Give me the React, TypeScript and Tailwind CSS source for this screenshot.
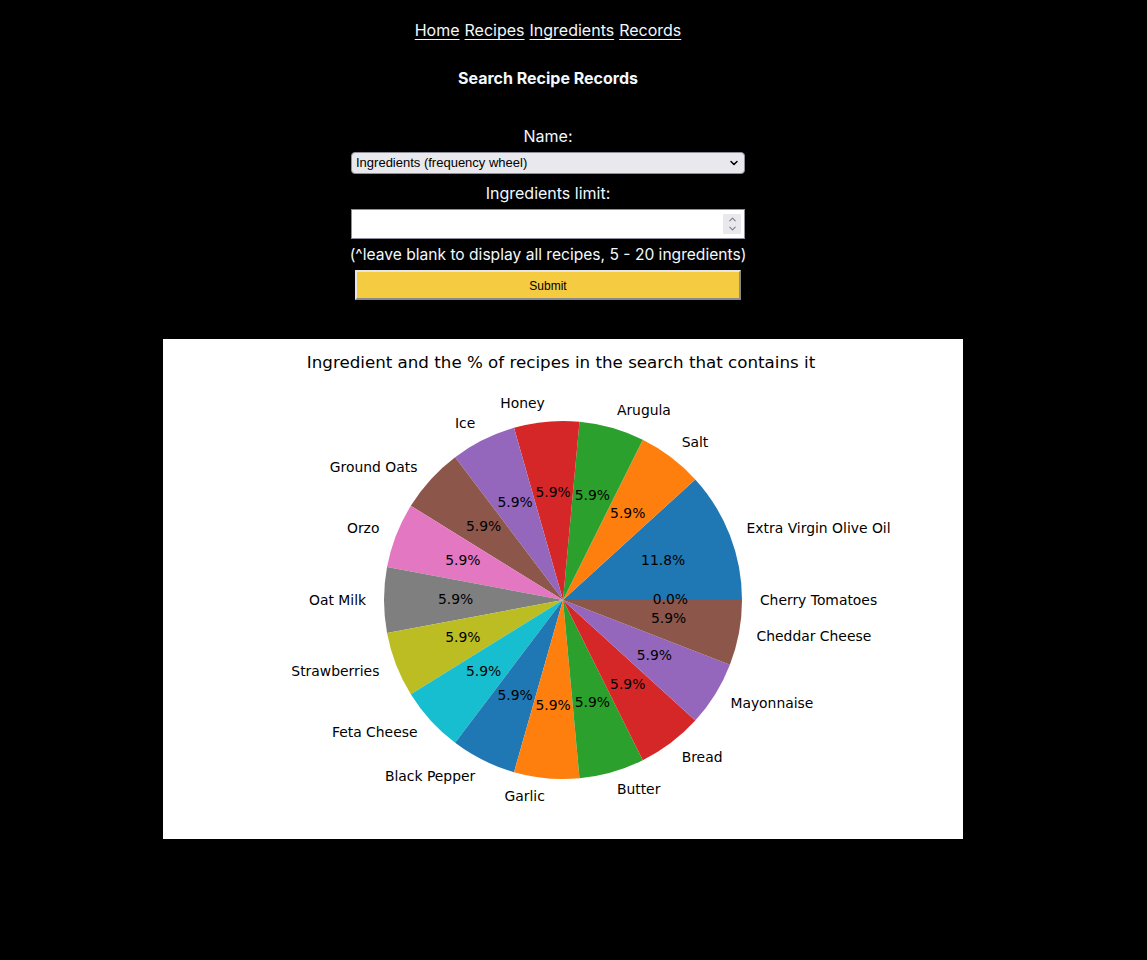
import { ChevronDown, ChevronUp } from 'lucide-react';

const slices = [
  { name: 'Extra Virgin Olive Oil', value: 2, color: '#1f77b4' },
  { name: 'Salt', value: 1, color: '#ff7f0e' },
  { name: 'Arugula', value: 1, color: '#2ca02c' },
  { name: 'Honey', value: 1, color: '#d62728' },
  { name: 'Ice', value: 1, color: '#9467bd' },
  { name: 'Ground Oats', value: 1, color: '#8c564b' },
  { name: 'Orzo', value: 1, color: '#e377c2' },
  { name: 'Oat Milk', value: 1, color: '#7f7f7f' },
  { name: 'Strawberries', value: 1, color: '#bcbd22' },
  { name: 'Feta Cheese', value: 1, color: '#17becf' },
  { name: 'Black Pepper', value: 1, color: '#1f77b4' },
  { name: 'Garlic', value: 1, color: '#ff7f0e' },
  { name: 'Butter', value: 1, color: '#2ca02c' },
  { name: 'Bread', value: 1, color: '#d62728' },
  { name: 'Mayonnaise', value: 1, color: '#9467bd' },
  { name: 'Cheddar Cheese', value: 1, color: '#8c564b' },
  { name: 'Cherry Tomatoes', value: 0, color: '#e377c2' },
];

const PieChart: React.FC = () => {
  const cx = 400;
  const cy = 261;
  const r = 179;
  const total = slices.reduce((s, x) => s + x.value, 0);
  let start = 0;
  const wedges = slices.map((s) => {
    const a0 = start;
    const a1 = start + (s.value / total) * Math.PI * 2;
    start = a1;
    const mid = (a0 + a1) / 2;
    const p0 = [cx + r * Math.cos(a0), cy - r * Math.sin(a0)];
    const p1 = [cx + r * Math.cos(a1), cy - r * Math.sin(a1)];
    const large = a1 - a0 > Math.PI ? 1 : 0;
    const d = `M${cx},${cy} L${p0[0]},${p0[1]} A${r},${r} 0 ${large} 0 ${p1[0]},${p1[1]} Z`;
    const lx = cx + 1.1 * r * Math.cos(mid);
    const ly = cy - 1.1 * r * Math.sin(mid) - 0.5;
    const px = cx + 0.6 * r * Math.cos(mid);
    const py = cy - 0.6 * r * Math.sin(mid) - 1.5;
    const pct = ((s.value / total) * 100).toFixed(1) + '%';
    return { ...s, d, lx, ly, px, py, pct, left: Math.cos(mid) > 0 };
  });

  return (
    <svg width="800" height="500" viewBox="0 0 800 500" className="block">
      <rect width="800" height="500" fill="#ffffff" />
      <text
        x="398"
        y="23"
        textAnchor="middle"
        dominantBaseline="central"
        fontFamily="'DejaVu Sans', sans-serif"
        fontSize="16.7"
        fill="#000"
      >
        Ingredient and the % of recipes in the search that contains it
      </text>
      {wedges.map((w) => (w.value > 0 ? <path key={w.name} d={w.d} fill={w.color} /> : null))}
      {wedges.map((w) => (
        <g key={w.name + '-t'} fontFamily="'DejaVu Sans', sans-serif" fontSize="13.9" fill="#000">
          <text x={w.lx} y={w.ly} textAnchor={w.left ? 'start' : 'end'} dominantBaseline="central">
            {w.name}
          </text>
          <text x={w.px} y={w.py} textAnchor="middle" dominantBaseline="central">
            {w.pct}
          </text>
        </g>
      ))}
    </svg>
  );
};

export default function App() {
  return (
    <div className="min-h-[960px] w-[1147px] bg-black text-[#f2f8ff] font-['Inter',sans-serif]">
      <div className="w-[1096px] flex flex-col items-center pt-[19px]">
        <nav className="flex gap-[5px] text-[16px] leading-[22px]">
          <a href="#" className="underline underline-offset-[3px]">Home</a>
          <a href="#" className="underline underline-offset-[3px]">Recipes</a>
          <a href="#" className="underline underline-offset-[3px]">Ingredients</a>
          <a href="#" className="underline underline-offset-[3px]">Records</a>
        </nav>
        <h2 className="mt-[26px] font-bold text-[16px] leading-[22px]">Search Recipe Records</h2>
        <form className="mt-[36px] w-[394px] flex flex-col items-center">
          <label className="text-[16px] leading-[22px]">Name:</label>
          <div className="relative mt-[5px] w-[394px] h-[22px]">
            <select
              className="block appearance-none w-full h-full rounded-[4px] border border-[#8f8f9d] bg-[#e9e9ed] text-black text-[13px] pl-[4px] font-['Liberation_Sans',sans-serif]"
              defaultValue="wheel"
            >
              <option value="wheel">Ingredients (frequency wheel)</option>
            </select>
            <ChevronDown
              className="absolute right-[5px] top-[5px] w-[12px] h-[12px] text-black pointer-events-none"
              strokeWidth={3}
            />
          </div>
          <label className="mt-[8px] text-[16px] leading-[22px]">Ingredients limit:</label>
          <div className="relative mt-[5px] w-[394px] h-[30px]">
            <input
              type="number"
              className="block w-full h-full border border-[#8f8f9d] bg-white text-black text-[13px] px-[4px] [&::-webkit-inner-spin-button]:appearance-none"
            />
            <div className="absolute right-[4px] top-[5px] w-[18px] h-[20px] bg-[#e9e9ed] flex flex-col items-center justify-center pointer-events-none text-[#7a7a80]">
              <ChevronUp className="w-[11px] h-[11px] -mb-[2px]" strokeWidth={2.2} />
              <ChevronDown className="w-[11px] h-[11px]" strokeWidth={2.2} />
            </div>
          </div>
          <p className="mt-[5px] text-[15.6px] leading-[22px] whitespace-nowrap">
            (^leave blank to display all recipes, 5 - 20 ingredients)
          </p>
          <button
            type="button"
            className="mt-[4px] w-[386px] h-[30px] bg-[#f5cb42] text-black text-[12px] font-['Liberation_Sans',sans-serif] border-2 border-t-[#e6e6e6] border-l-[#e6e6e6] border-b-[#8a8a8a] border-r-[#8a8a8a] pt-[1px]"
          >
            Submit
          </button>
        </form>
      </div>
      <div className="pl-[163px] pt-[39px]">
        <PieChart />
      </div>
    </div>
  );
}
